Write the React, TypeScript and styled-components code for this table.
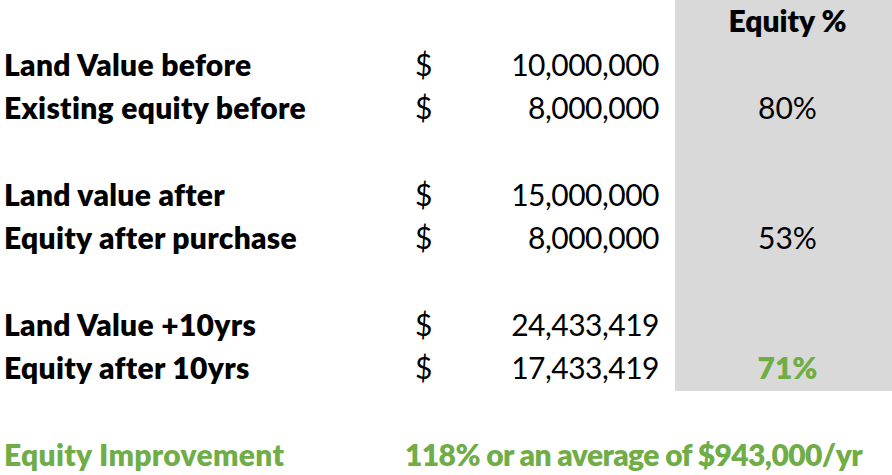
import styled, { createGlobalStyle } from 'styled-components';

const GlobalStyle = createGlobalStyle`
  html, body {
    margin: 0;
    padding: 0;
    background: #ffffff;
  }
  body {
    font-family: Lato, "Liberation Sans", sans-serif;
    color: #000000;
  }
`;

const GREEN = '#70ad47';
const SHADE = '#d9d9d9';
const ROW_H = '43.4px';

const Sheet = styled.div`
  display: grid;
  grid-template-columns: 405px 35px 219px 16px 217px;
  grid-auto-rows: ${ROW_H};
  width: 892px;
  font-size: 30px;
  line-height: 1;
`;

const Cell = styled.div<{ $shaded?: boolean }>`
  display: flex;
  align-items: center;
  padding-bottom: 3px;
  white-space: nowrap;
  background: ${(p) => (p.$shaded ? SHADE : 'transparent')};
`;

const Label = styled(Cell)<{ $green?: boolean }>`
  padding-left: 4px;
  font-weight: 800;
  letter-spacing: 0.3px;
  color: ${(p) => (p.$green ? GREEN : '#000')};
`;

const Dollar = styled(Cell)`
  padding-left: 10px;
`;

const Amount = styled(Cell)`
  justify-content: flex-end;
  letter-spacing: -0.5px;
`;

const Percent = styled(Cell)<{ $bold?: boolean; $green?: boolean }>`
  justify-content: center;
  padding-left: 8px;
  font-weight: ${(p) => (p.$bold ? 800 : 400)};
  color: ${(p) => (p.$green ? GREEN : '#000')};
`;

const Summary = styled(Cell)`
  grid-column: 2 / -1;
  font-weight: 800;
  letter-spacing: -0.6px;
  color: ${GREEN};
`;

type Row = {
  label?: string;
  amount?: string;
  pct?: string;
  highlight?: boolean;
};

const rows: Row[] = [
  { label: 'Land Value before', amount: '10,000,000' },
  { label: 'Existing equity before', amount: '8,000,000', pct: '80%' },
  {},
  { label: 'Land value after', amount: '15,000,000' },
  { label: 'Equity after purchase', amount: '8,000,000', pct: '53%' },
  {},
  { label: 'Land Value +10yrs', amount: '24,433,419' },
  { label: 'Equity after 10yrs', amount: '17,433,419', pct: '71%', highlight: true },
];

export default function App() {
  return (
    <>
      <GlobalStyle />
      <Sheet>
        <Label />
        <Cell />
        <Cell />
        <Cell />
        <Percent $shaded $bold>Equity %</Percent>

        {rows.map((r, i) => (
          <Row key={i} row={r} />
        ))}

        <Cell />
        <Cell />
        <Cell />
        <Cell />
        <Cell />

        <Label $green>Equity Improvement</Label>
        <Summary>118% or an average of $943,000/yr</Summary>
      </Sheet>
    </>
  );
}

function Row({ row }: { row: Row }) {
  return (
    <>
      <Label>{row.label}</Label>
      <Dollar>{row.amount ? '$' : ''}</Dollar>
      <Amount>{row.amount}</Amount>
      <Cell />
      <Percent $shaded $bold={row.highlight} $green={row.highlight}>
        {row.pct}
      </Percent>
    </>
  );
}
